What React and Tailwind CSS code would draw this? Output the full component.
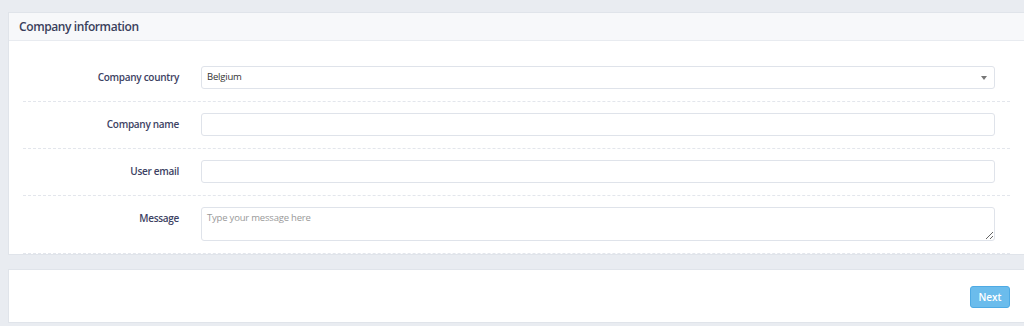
import React from "react";

const font = { fontFamily: '"Open Sans", "Noto Sans", sans-serif' };

function Row({ label, children }) {
  return (
    <div className="flex items-start border-b border-dashed border-[#e3e6ec] pt-[11px] pb-[12px] pr-[15px]">
      <div className="w-[156px] shrink-0 text-right text-[10px] tracking-[-0.3px] font-semibold text-[#3d4263] leading-[23px]">
        {label}
      </div>
      <div className="ml-[22px] flex-1">{children}</div>
    </div>
  );
}

export default function App() {
  return (
    <div className="w-[1024px] h-[326px] overflow-hidden bg-[#e9ecf1] pl-2 pt-3" style={font}>
      <div className="w-[1017px] bg-white border-l border-t border-b border-[#e0e4ea]">
        <div className="h-[28px] bg-[#f7f8fa] border-b border-[#e8ebf0] pl-[10px] flex items-center">
          <span className="text-[12px] tracking-[-0.4px] font-semibold text-[#3a3f5c] mt-[1px]">Company information</span>
        </div>
        <div className="pt-[14px] pl-[14px] pr-[15px]">
          <Row label="Company country">
            <div className="h-[23px] w-full border border-[#dfe3ea] rounded-[3px] flex items-center justify-between pl-[5px] pr-[7px] text-[9.5px] tracking-[-0.2px] text-[#333]">
              <span>Belgium</span>
              <span className="w-0 h-0 border-l-[3px] border-r-[3px] border-t-[4px] border-l-transparent border-r-transparent border-t-[#777]" />
            </div>
          </Row>
          <Row label="Company name">
            <div className="h-[23px] w-full border border-[#dfe3ea] rounded-[3px]" />
          </Row>
          <Row label="User email">
            <div className="h-[23px] w-full border border-[#dfe3ea] rounded-[3px]" />
          </Row>
          <Row label="Message">
            <textarea
              className="block h-[34px] w-full border border-[#dfe3ea] rounded-[3px] px-[5px] py-[3px] text-[9.5px] tracking-[-0.2px] text-[#333] placeholder:text-[#999] outline-none"
              placeholder="Type your message here"
              style={font}
            />
          </Row>
        </div>
      </div>
      <div className="mt-[14px] w-[1017px] h-[54px] bg-white border-l border-t border-b border-[#e0e4ea] flex items-center justify-end pr-[15px]">
        <button className="mt-[2px] h-[22px] w-[40px] rounded-[3px] bg-[#6bbcec] border border-[#4eaae4] text-white text-[10px] font-semibold" style={font}>
          Next
        </button>
      </div>
    </div>
  );
}
